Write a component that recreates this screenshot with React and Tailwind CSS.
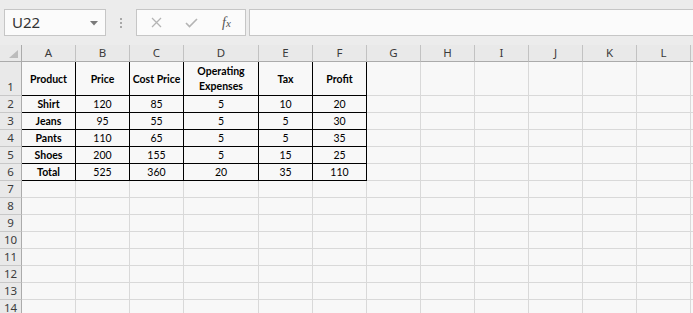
import React from 'react';

const cols = ['A', 'B', 'C', 'D', 'E', 'F', 'G', 'H', 'I', 'J', 'K', 'L', 'M'];
const widths = ['w-[54px]', 'w-[54px]', 'w-[54px]', 'w-[75px]', 'w-[54px]', 'w-[54px]', 'w-[54px]', 'w-[54px]', 'w-[54px]', 'w-[54px]', 'w-[54px]', 'w-[54px]', 'w-[54px]'];

const data = [
  ['Product', 'Price', 'Cost Price', 'Operating Expenses', 'Tax', 'Profit'],
  ['Shirt', '120', '85', '5', '10', '20'],
  ['Jeans', '95', '55', '5', '5', '30'],
  ['Pants', '110', '65', '5', '5', '35'],
  ['Shoes', '200', '155', '5', '15', '25'],
  ['Total', '525', '360', '20', '35', '110'],
];

const cellFont = { fontFamily: 'Lato, "Open Sans", sans-serif' };
const uiFont = { fontFamily: '"Noto Sans", "Open Sans", sans-serif' };

function TopBar() {
  return (
    <div className="flex items-start h-[45px] bg-[#ececec] pt-[9px] pl-[4px] shrink-0">
      {/* Name box */}
      <div className="relative w-[102px] h-[27px] border border-[#c6c6c6] bg-[#fbfbfb] flex items-center pl-[7px]">
        <span className="text-[15px] text-[#333] leading-none" style={uiFont}>U22</span>
        <svg className="absolute right-[7px] top-[11px]" width="8" height="5" viewBox="0 0 8 5">
          <path d="M0 0 L8 0 L4 4.5 Z" fill="#7a7a7a" />
        </svg>
      </div>
      {/* grip dots */}
      <div className="w-[30px] h-[27px] flex flex-col items-center justify-center gap-[2px]">
        <div className="w-[2px] h-[2px] bg-[#a8a8a8]" />
        <div className="w-[2px] h-[2px] bg-[#a8a8a8]" />
        <div className="w-[2px] h-[2px] bg-[#a8a8a8]" />
      </div>
      {/* cancel / enter / fx */}
      <div className="w-[110px] h-[27px] border border-[#c6c6c6] bg-[#fbfbfb] flex items-center">
        <svg className="ml-[14px]" width="11" height="11" viewBox="0 0 11 11">
          <path d="M1 1 L10 10 M10 1 L1 10" stroke="#b4b4b4" strokeWidth="1.3" />
        </svg>
        <svg className="ml-[23px]" width="13" height="10" viewBox="0 0 13 10">
          <path d="M1 5 L4.5 8.5 L12 1" stroke="#b4b4b4" strokeWidth="1.6" fill="none" />
        </svg>
        <span className="ml-[24px] text-[14px] italic text-[#555] leading-none" style={{ fontFamily: '"Liberation Serif", serif' }}>
          f<span className="text-[11px]">x</span>
        </span>
      </div>
      {/* formula input */}
      <div className="flex-1 ml-[3px] h-[27px] border border-r-0 border-[#c6c6c6] bg-[#fbfbfb]" />
    </div>
  );
}

function ColumnHeaders() {
  return (
    <div className="flex h-[17px] shrink-0">
      <div className="relative w-[22px] h-[17px] bg-[#e9e9e9] border-r border-b border-[#ababab] shrink-0">
        <svg className="absolute left-[9px] top-[5px]" width="9" height="8" viewBox="0 0 9 8">
          <path d="M9 0 L9 8 L0 8 Z" fill="#bcbcbc" />
        </svg>
      </div>
      {cols.map((c, i) => (
        <div
          key={c}
          className={`${widths[i]} h-[17px] shrink-0 bg-[#e9e9e9] border-r border-r-[#c2c2c2] border-b border-b-[#ababab] flex items-center justify-center text-[11.5px] text-[#3b3b3b]`}
          style={uiFont}
        >
          {c === 'M' ? null : c}
        </div>
      ))}
    </div>
  );
}

function Row({ n }) {
  const tall = n === 1;
  const values = n <= 6 ? data[n - 1] : null;
  return (
    <div className={`flex shrink-0 ${tall ? 'h-[34px]' : 'h-[17px]'}`}>
      <div
        className={`w-[22px] shrink-0 bg-[#e9e9e9] border-r border-r-[#ababab] border-b border-b-[#c8c8c8] flex justify-center text-[11.5px] text-[#3b3b3b] ${tall ? 'items-end' : 'items-center'}`}
        style={uiFont}
      >
        {n}
      </div>
      {cols.map((c, i) => {
        const inTable = values && i < 6;
        const border = inTable ? 'border-r border-b border-black' : 'border-r border-b border-[#d9d9d9]';
        return (
          <div
            key={c}
            className={`${widths[i]} shrink-0 bg-[#f8f8f8] ${border} flex items-center justify-center text-center text-[10.5px] text-black ${tall ? 'leading-[15px] pt-[1px]' : 'leading-none'} ${inTable && (n === 1 || i === 0) ? 'font-bold' : ''}`}
            style={cellFont}
          >
            {inTable ? (c === 'D' && n === 1 ? <span>Operating<br />Expenses</span> : values[i]) : null}
          </div>
        );
      })}
    </div>
  );
}

export default function App() {
  const rows = Array.from({ length: 14 }, (_, i) => i + 1);
  return (
    <div className="w-[693px] h-[313px] overflow-hidden flex flex-col bg-[#f8f8f8]">
      <TopBar />
      <ColumnHeaders />
      {rows.map((n) => (
        <Row key={n} n={n} />
      ))}
    </div>
  );
}
